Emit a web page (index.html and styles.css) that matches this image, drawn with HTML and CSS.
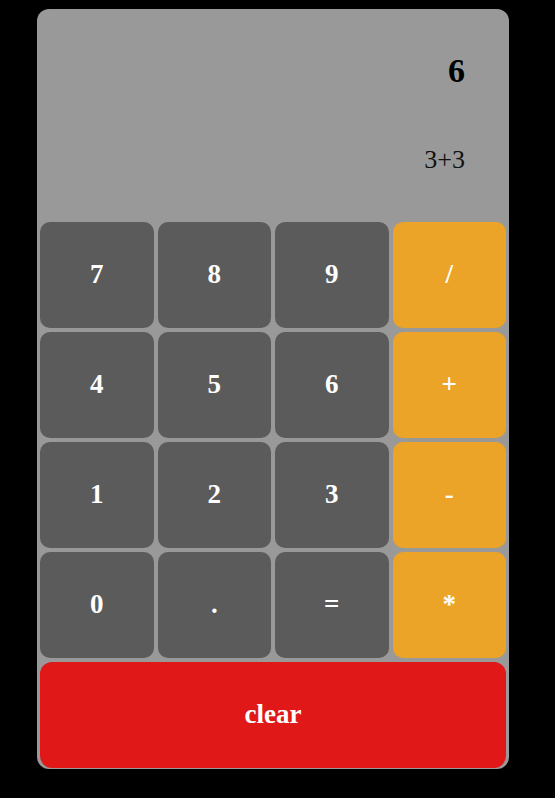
FILE: index.html
```html
<!DOCTYPE html>
<html>
<head>
<meta charset="utf-8">
<link rel="stylesheet" href="styles.css">
</head>
<body>
<div class="calc">
  <div class="display">
    <div class="result">6</div>
    <div class="expr">3+3</div>
  </div>
  <div class="keys">
    <button class="key">7</button>
    <button class="key">8</button>
    <button class="key">9</button>
    <button class="key op">/</button>
    <button class="key">4</button>
    <button class="key">5</button>
    <button class="key">6</button>
    <button class="key op">+</button>
    <button class="key">1</button>
    <button class="key">2</button>
    <button class="key">3</button>
    <button class="key op">-</button>
    <button class="key">0</button>
    <button class="key">.</button>
    <button class="key">=</button>
    <button class="key op">*</button>
    <button class="key clear">clear</button>
  </div>
</div>
</body>
</html>
```
FILE: styles.css
```css
html, body {
  margin: 0;
  padding: 0;
  background: #000;
  height: 100%;
}
body {
  font-family: "Liberation Serif", "Times New Roman", serif;
}
.calc {
  width: 472px;
  margin: 9px 0 0 37px;
  background: #999999;
  border-radius: 12px;
  padding: 0 3px 1px;
  box-sizing: border-box;
  display: flex;
  flex-direction: column;
  gap: 4px;
}
.display {
  height: 209px;
  display: flex;
  flex-direction: column;
  align-items: flex-end;
  padding-right: 41px;
  box-sizing: border-box;
}
.result {
  margin-top: 42px;
  font-size: 34px;
  line-height: 40px;
  font-weight: bold;
  color: #000;
}
.expr {
  margin-top: 53px;
  font-size: 26px;
  line-height: 32px;
  color: #111;
}
.keys {
  display: grid;
  grid-template-columns: repeat(4, 1fr);
  grid-auto-rows: 106px;
  gap: 4px;
}
.key {
  border: none;
  border-radius: 10px;
  background: #5b5b5b;
  color: #fff;
  font-family: "Liberation Serif", "Times New Roman", serif;
  font-weight: bold;
  font-size: 27px;
  padding: 0 0 2px;
  margin: 0;
}
.key.op {
  background: #eba427;
}
.key.clear {
  grid-column: 1 / -1;
  background: #e01818;
  border-radius: 12px;
}
```
